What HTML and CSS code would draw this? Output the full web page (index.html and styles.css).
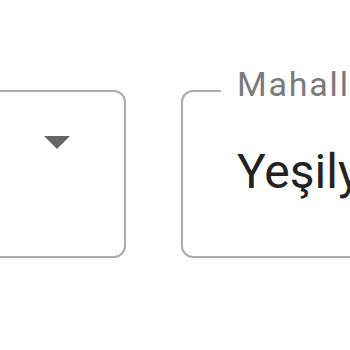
FILE: index.html
```html
<!DOCTYPE html>
<html>
<head>
<meta charset="utf-8">
<link rel="stylesheet" href="styles.css">
</head>
<body>
<div class="row">
  <div class="field select">
    <svg class="arrow" width="28" height="14" viewBox="0 0 28 14"><path d="M1 1 L27 1 L14 14 Z" fill="#666"/></svg>
  </div>
  <div class="field text">
    <span class="label">Mahalle</span>
    <span class="value">Yeşilyurt</span>
  </div>
</div>
</body>
</html>
```
FILE: styles.css
```css
html, body {
  margin: 0;
  padding: 0;
  width: 350px;
  height: 350px;
  overflow: hidden;
  background: #fff;
  font-family: Roboto, "Noto Sans", sans-serif;
}
.row {
  display: flex;
  gap: 55px;
  padding-top: 90px;
  margin-left: -100px;
}
.field {
  box-sizing: border-box;
  height: 168px;
  border: 2px solid #acacac;
  border-radius: 12px;
  position: relative;
  flex-shrink: 0;
}
.select {
  width: 226px;
  display: flex;
  justify-content: flex-end;
  align-items: flex-start;
  padding: 43px 53px 0 0;
}
.arrow {
  display: block;
}
.text {
  width: 400px;
  padding: 0 0 0 54px;
  display: flex;
  align-items: center;
}
.label {
  position: absolute;
  left: 38px;
  top: -33px;
  padding: 0 6px 0 16px;
  background: #fff;
  font-size: 34px;
  letter-spacing: 1.8px;
  color: #7a7a7a;
  line-height: 50px;
}
.value {
  font-size: 48px;
  color: #222;
  margin-top: -6px;
}
```
